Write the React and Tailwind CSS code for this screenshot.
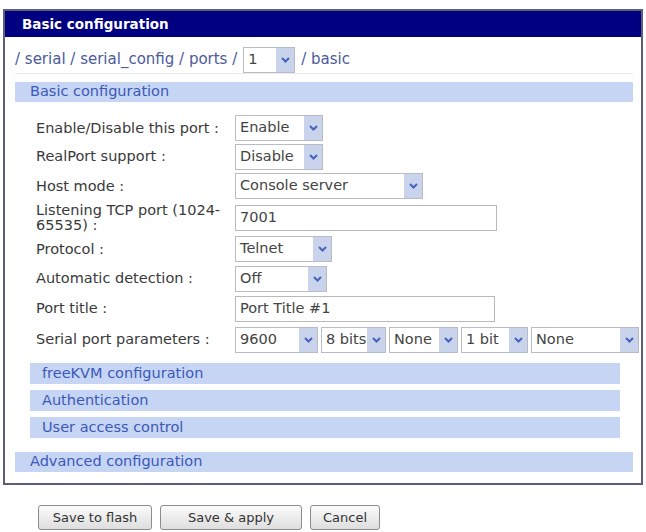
import React from 'react';

const FONT = "font-['DejaVu_Sans','Liberation_Sans',sans-serif]";

// dropdown mimic: white value area + bluish arrow button
const Dropdown = ({ value, width }) => (
    <div className={`flex h-[26px] border border-[#b9bcc6] bg-white ${width}`}>
        <div className="flex-1 flex items-center pl-[4px] text-[14.5px] text-[#444] whitespace-nowrap overflow-hidden">{value}</div>
        <div className="w-[18px] bg-[#c9d4ec] flex items-center justify-center">
            <svg width="9" height="6" viewBox="0 0 9 6">
                <polyline points="1,1 4.5,4.5 8,1" fill="none" stroke="#4662c0" strokeWidth="2" />
            </svg>
        </div>
    </div>
);

const TextField = ({ value, width }) => (
    <div className={`h-[26px] border border-[#b9b9b9] bg-white flex items-center pl-[4px] text-[14.5px] text-[#444] ${width}`}>
        {value}
    </div>
);

const Row = ({ label, children, h }) => (
    <div className={`flex items-center ${h}`}>
        <div className="w-[230px] pl-[31px] text-[14.5px] leading-[15px] text-[#3a3a3a]">{label}</div>
        <div className="flex items-center gap-[3px]">{children}</div>
    </div>
);

const SubBar = ({ children }) => (
    <div className="ml-[25px] w-[590px] h-[21px] bg-[#c6d5f4] flex items-center pl-[12px] text-[14.5px] text-[#3c58b8]">
        {children}
    </div>
);

export default function App() {
    return (
        <div className={`w-[646px] h-[532px] bg-white ${FONT} overflow-hidden`}>
            <div className="pt-[9px] pl-[3px]">
                <div className="w-[640px] h-[476px] border-2 border-[#5e5e7c] bg-white flex flex-col">
                    <div className="h-[26px] bg-[#000080] flex items-center pl-[17px] text-[13.5px] font-bold text-white">
                        Basic configuration
                    </div>

                    {/* breadcrumb path with port picker */}
                    <div className="mt-[9px] h-[28px] ml-[10px] mr-[8px] flex items-center gap-[6px] border-b border-[#e9eaef] text-[15px] text-[#4b5b9c]">
                        <span>/ serial / serial_config / ports /</span>
                        <Dropdown value="1" width="w-[52px]" />
                        <span>/ basic</span>
                    </div>

                    <div className="mt-[8px] ml-[10px] w-[618px] h-[20px] bg-[#c6d5f4] flex items-center pl-[15px] text-[14.5px] text-[#3c58b8]">
                        Basic configuration
                    </div>

                    <div className="mt-[12px] flex flex-col">
                        <Row label="Enable/Disable this port :" h="h-[28px]">
                            <Dropdown value="Enable" width="w-[88px]" />
                        </Row>
                        <Row label="RealPort support :" h="h-[29px]">
                            <Dropdown value="Disable" width="w-[88px]" />
                        </Row>
                        <Row label="Host mode :" h="h-[30px]">
                            <Dropdown value="Console server" width="w-[188px]" />
                        </Row>
                        <Row label={<>Listening TCP port (1024-<br />65535) :</>} h="h-[33px]">
                            <TextField value="7001" width="w-[262px]" />
                        </Row>
                        <Row label="Protocol :" h="h-[30px]">
                            <Dropdown value="Telnet" width="w-[97px]" />
                        </Row>
                        <Row label="Automatic detection :" h="h-[29px]">
                            <Dropdown value="Off" width="w-[92px]" />
                        </Row>
                        <Row label="Port title :" h="h-[31px]">
                            <TextField value="Port Title #1" width="w-[260px]" />
                        </Row>
                        <Row label="Serial port parameters :" h="h-[31px]">
                            <Dropdown value="9600" width="w-[83px]" />
                            <Dropdown value="8 bits" width="w-[65px]" />
                            <Dropdown value="None" width="w-[69px]" />
                            <Dropdown value="1 bit" width="w-[67px]" />
                            <Dropdown value="None" width="w-[108px]" />
                        </Row>
                    </div>

                    <div className="mt-[8px] flex flex-col gap-[6px]">
                        <SubBar>freeKVM configuration</SubBar>
                        <SubBar>Authentication</SubBar>
                        <SubBar>User access control</SubBar>
                    </div>

                    <div className="mt-[14px] ml-[10px] w-[618px] h-[20px] bg-[#c6d5f4] flex items-center pl-[15px] text-[14.5px] text-[#3c58b8]">
                        Advanced configuration
                    </div>
                </div>
            </div>

            <div className="mt-[20px] ml-[38px] flex gap-[8px]">
                {[
                    ['Save to flash', 'w-[114px]'],
                    ['Save & apply', 'w-[142px]'],
                    ['Cancel', 'w-[70px]'],
                ].map(([text, w]) => (
                    <button
                        key={text}
                        className={`${w} h-[25px] rounded-[3px] border border-[#8c8c8c] bg-gradient-to-b from-[#fbfbfb] to-[#dedede] text-[13px] text-[#333]`}
                    >
                        {text}
                    </button>
                ))}
            </div>
        </div>
    );
}
